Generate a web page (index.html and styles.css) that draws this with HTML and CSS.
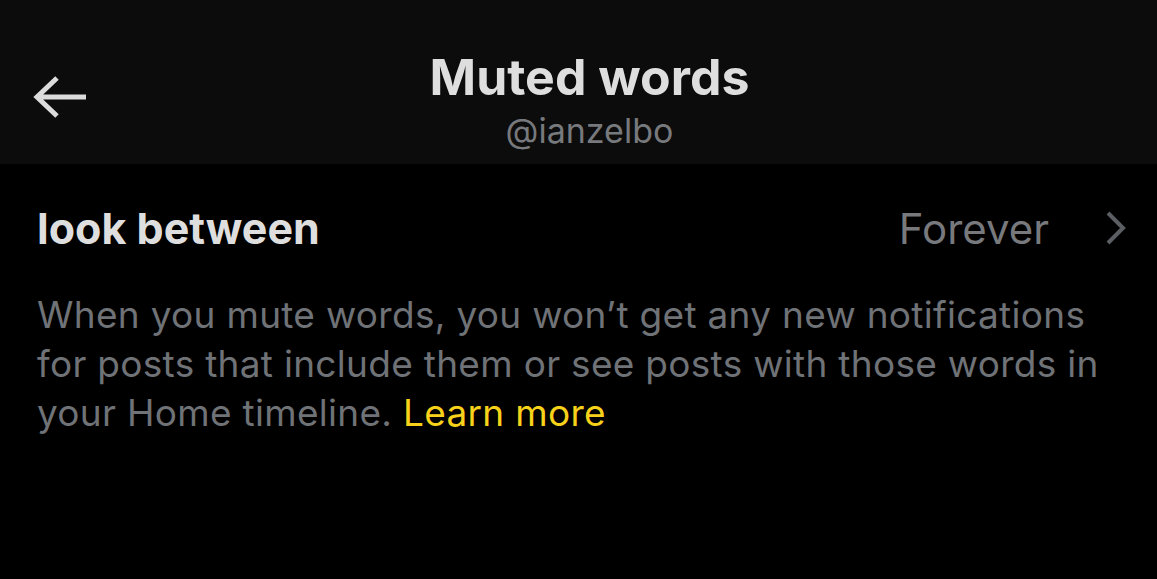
FILE: index.html
```html
<!DOCTYPE html>
<html lang="en">
<head>
<meta charset="utf-8">
<title>Muted words</title>
<link rel="stylesheet" href="styles.css">
</head>
<body>
<div class="screen">
  <header class="topbar">
    <div class="back">
      <svg class="back-icon" viewBox="0 0 56 46" width="56" height="46" aria-hidden="true">
        <path d="M53 21H4M24 2L4 21l20 19" fill="none" stroke="#dcdcdc" stroke-width="5" stroke-linecap="butt" stroke-linejoin="miter"/>
      </svg>
    </div>
    <div class="titles">
      <h1 class="title">Muted words</h1>
      <div class="handle">@ianzelbo</div>
    </div>
    <div class="spacer"></div>
  </header>
  <main class="content">
    <div class="row">
      <div class="word">look between</div>
      <div class="duration">
        <span class="duration-text">Forever</span>
        <svg class="chevron" viewBox="0 0 22 34" width="22" height="34" aria-hidden="true">
          <path d="M3 2l15 15L3 32" fill="none" stroke="#5b5e62" stroke-width="4"/>
        </svg>
      </div>
    </div>
    <p class="desc">When you mute words, you won’t get any new notifications for posts that include them or see posts with those words in your Home timeline. <span class="link">Learn more</span></p>
  </main>
</div>
</body>
</html>
```
FILE: styles.css
```css
html, body {
  margin: 0;
  padding: 0;
  background: #000;
}
body {
  font-family: Inter, Roboto, "Noto Sans", "Liberation Sans", sans-serif;
  color: #dedede;
  width: 1157px;
  height: 579px;
  overflow: hidden;
}
.topbar {
  display: grid;
  grid-template-columns: 100px 1fr 78px;
  align-items: start;
  height: 164px;
  background: #0c0c0c;
}
.back {
  padding-left: 33px;
  padding-top: 76px;
}
.back-icon {
  display: block;
}
.titles {
  text-align: center;
  padding-top: 47px;
}
.title {
  margin: 0;
  font-size: 50px;
  font-weight: 700;
  line-height: 60px;
  color: #dedede;
}
.handle {
  margin-top: 4px;
  font-size: 34px;
  line-height: 40px;
  color: #77797d;
}
.content {
  padding: 0 30px 0 37px;
}
.row {
  display: flex;
  align-items: center;
  justify-content: space-between;
  height: 128px;
}
.word {
  font-size: 43px;
  font-weight: 700;
  color: #dedede;
}
.duration {
  display: flex;
  align-items: center;
  gap: 56px;
}
.duration-text {
  font-size: 42px;
  color: #77797d;
}
.chevron {
  display: block;
}
.desc {
  margin: 0;
  max-width: 1080px;
  font-size: 37px;
  letter-spacing: 0.3px;
  line-height: 49px;
  color: #6f7276;
  margin-top: -2px;
}
.link {
  color: #f8d21a;
}
```
